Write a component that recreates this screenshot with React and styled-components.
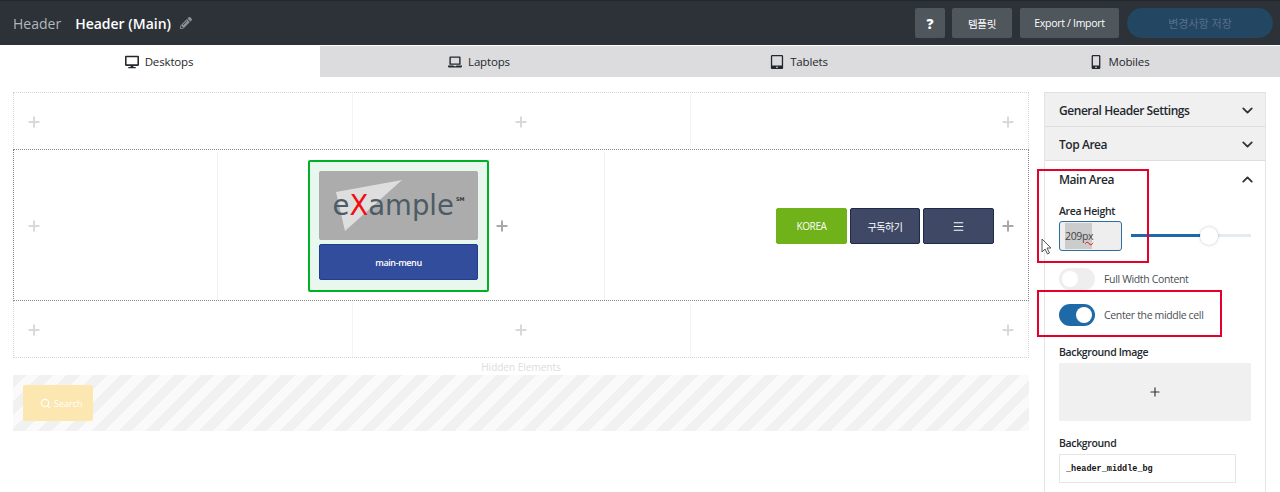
import styled, { createGlobalStyle } from 'styled-components';
import { FaDesktop, FaLaptop, FaTabletAlt, FaMobileAlt, FaPencilAlt } from 'react-icons/fa';
import { ChevronDown, ChevronUp, Plus, Search, Menu } from 'lucide-react';

const GlobalStyle = createGlobalStyle`
  html, body {
    margin: 0;
    height: 492px;
    overflow: hidden;
    background: #fff;
    font-family: 'Open Sans', 'Noto Sans CJK KR', sans-serif;
  }
  * { box-sizing: border-box; }
`;

const TABS = [
  { label: 'Desktops', Icon: FaDesktop, active: true },
  { label: 'Laptops', Icon: FaLaptop },
  { label: 'Tablets', Icon: FaTabletAlt },
  { label: 'Mobiles', Icon: FaMobileAlt },
];

function AddCell({ align }) {
  return (
    <Cell $align={align}>
      <AddIcon size={16} strokeWidth={3} />
    </Cell>
  );
}

function FadedRow() {
  return (
    <FadedGrid>
      <AddCell align="flex-start" />
      <AddCell align="center" />
      <AddCell align="flex-end" />
    </FadedGrid>
  );
}

export default function App() {
  return (
    <>
      <GlobalStyle />
      <TopBar>
        <Title>
          <Crumb>Header</Crumb>
          <CurrentName>Header (Main)</CurrentName>
          <FaPencilAlt size={12} color="#8a8f94" />
        </Title>
        <Actions>
          <BarButton $width={30} $bold>?</BarButton>
          <BarButton $width={60}>템플릿</BarButton>
          <BarButton $width={99}>Export / Import</BarButton>
          <SaveButton>변경사항 저장</SaveButton>
        </Actions>
      </TopBar>

      <TabRow>
        {TABS.map(({ label, Icon, active }) => (
          <Tab key={label} $active={active}>
            <Icon size={14} />
            {label}
          </Tab>
        ))}
      </TabRow>

      <Content>
        <Builder>
          <FadedRow />
          <MainGrid>
            <AddCell align="flex-start" />
            <CenterCell>
              <SelectedGroup>
                <LogoBox>
                  <LogoShape viewBox="0 0 159 69">
                    <polygon points="17,21 83,9 26,60" fill="#dedede" />
                  </LogoShape>
                  <LogoText>
                    e<LogoX>X</LogoX>ample<LogoMark>SM</LogoMark>
                  </LogoText>
                </LogoBox>
                <MenuBox>main-menu</MenuBox>
              </SelectedGroup>
              <DarkPlus size={16} strokeWidth={3} />
            </CenterCell>
            <RightCell>
              <SmallButton $width={71} $color="#6fb21a" $edge="#6fb21a">KOREA</SmallButton>
              <SmallButton $width={70}>구독하기</SmallButton>
              <SmallButton $width={71}><Menu size={13} /></SmallButton>
              <DarkPlus size={16} strokeWidth={3} />
            </RightCell>
          </MainGrid>
          <FadedRow />
          <HiddenLabel>Hidden Elements</HiddenLabel>
          <HiddenArea>
            <SearchChip>
              <Search size={11} strokeWidth={2.5} />
              Search
            </SearchChip>
          </HiddenArea>
        </Builder>

        <Sidebar>
          <AccordionHead>
            General Header Settings
            <ChevronDown size={17} strokeWidth={2.6} color="#333" />
          </AccordionHead>
          <AccordionHead>
            Top Area
            <ChevronDown size={17} strokeWidth={2.6} color="#333" />
          </AccordionHead>
          <OpenHead>
            Main Area
            <ChevronUp size={17} strokeWidth={2.6} color="#333" />
          </OpenHead>
          <Panel>
            <FieldLabel>Area Height</FieldLabel>
            <HeightRow>
              <HeightInput>
                <Selected>209</Selected>
                <Misspelt>px</Misspelt>
              </HeightInput>
              <Slider>
                <SliderFill />
                <SliderThumb />
              </Slider>
            </HeightRow>
            <ToggleRow $top={17}>
              <Toggle />
              Full Width Content
            </ToggleRow>
            <ToggleRow $top={14}>
              <Toggle $on />
              Center the middle cell
            </ToggleRow>
            <SpacedLabel $top={19}>Background Image</SpacedLabel>
            <ImagePicker>
              <Plus size={14} strokeWidth={2} color="#333" />
            </ImagePicker>
            <SpacedLabel $top={15}>Background</SpacedLabel>
            <TextValue defaultValue="_header_middle_bg" />
          </Panel>
          <RedMark $left={-8} $top={76} $width={112} $height={94} />
          <RedMark $left={-8} $top={197} $width={185} $height={47} />
          <Cursor viewBox="0 0 11 17">
            <path d="M1 1v13l3-3 2.5 5 2-1-2.500-5H10z" fill="#fff" stroke="#555" strokeWidth="1" />
          </Cursor>
        </Sidebar>
      </Content>
    </>
  );
}

const TopBar = styled.header`
  height: 45px;
  padding: 7px 7px 7px 13px;
  display: flex;
  justify-content: space-between;
  align-items: center;
  border-top: 1px solid #23282d;
  background: #2c3238;
`;

const Title = styled.div`
  display: flex;
  align-items: center;
  font-size: 14px;
`;

const Crumb = styled.span`
  color: #b4b7ba;
  margin-right: 14px;
`;

const CurrentName = styled.span`
  color: #fff;
  font-weight: 600;
  margin-right: 9px;
`;

const Actions = styled.div`
  display: flex;
  gap: 8px;
`;

const BarButton = styled.button`
  width: ${({ $width }) => $width}px;
  height: 30px;
  margin-right: ${({ $bold }) => ($bold ? '-1px' : '0')};
  padding: 0;
  border: 0;
  border-radius: 2px;
  background: #4f565c;
  color: #fff;
  font-family: inherit;
  font-size: ${({ $bold }) => ($bold ? '14px' : '10.5px')};
  font-weight: ${({ $bold }) => ($bold ? 800 : 400)};
  letter-spacing: ${({ $bold }) => ($bold ? '0' : '-0.3px')};
`;

const SaveButton = styled.button`
  width: 146px;
  height: 30px;
  border: 0;
  border-radius: 15px;
  background: #234662;
  color: #577088;
  font-family: inherit;
  font-size: 11px;
`;

const TabRow = styled.nav`
  margin-top: 1px;
  height: 31px;
  display: grid;
  grid-template-columns: repeat(4, 1fr);
`;

const Tab = styled.div`
  display: flex;
  justify-content: center;
  align-items: center;
  gap: 6px;
  padding-right: 2px;
  font-size: 11.5px;
  letter-spacing: -0.15px;
  color: #23282d;
  background: ${({ $active }) => ($active ? '#fff' : '#dcdcde')};
`;

const Content = styled.main`
  display: flex;
  align-items: flex-start;
  padding: 15px 14px 0 13px;
  gap: 15px;
`;

const Builder = styled.section`
  width: 1016px;
  flex: none;
`;

const FadedGrid = styled.div`
  height: 58px;
  padding-top: 1px;
  display: grid;
  grid-template-columns: repeat(3, 1fr);
  border: 1px dotted #d4d4d4;
`;

const Cell = styled.div`
  display: flex;
  align-items: center;
  justify-content: ${({ $align }) => $align};
  padding: 0 12px;
  & + & {
    box-shadow: inset 1px 0 #f4f4f4;
  }
`;

const AddIcon = styled(Plus)`
  color: #d9d9d9;
`;

const DarkPlus = styled(Plus)`
  color: #a8a8a8;
  flex: none;
`;

const MainGrid = styled.div`
  height: 152px;
  margin-top: -1px;
  margin-bottom: -1px;
  padding-top: 2px;
  display: grid;
  grid-template-columns: 203px 388px 1fr;
  border: 1px dotted #888;
  position: relative;
`;

const CenterCell = styled.div`
  display: flex;
  align-items: center;
  justify-content: center;
  gap: 5px;
  border-left: 1px solid #f0f0f0;
  border-right: 1px solid #f0f0f0;
  padding-right: 4px;
`;

const RightCell = styled.div`
  display: flex;
  align-items: center;
  justify-content: flex-end;
  gap: 3px;
  padding-right: 12px;
  & > svg {
    margin-left: 3px;
  }
`;

const SelectedGroup = styled.div`
  width: 181px;
  height: 132px;
  padding: 9px;
  display: flex;
  flex-direction: column;
  gap: 4px;
  border: 2px solid #00b125;
  border-radius: 2px;
  background: #e9f8ef;
`;

const LogoBox = styled.div`
  height: 69px;
  position: relative;
  display: flex;
  align-items: center;
  justify-content: center;
  border-radius: 2px;
  background: #acacac;
  overflow: hidden;
`;

const LogoShape = styled.svg`
  position: absolute;
  inset: 0;
  width: 100%;
  height: 100%;
`;

const LogoText = styled.div`
  position: relative;
  display: flex;
  font-family: 'DejaVu Sans', sans-serif;
  font-size: 27.5px;
  line-height: 1;
  color: #4c5b65;
`;

const LogoX = styled.span`
  color: #f00f0f;
`;

const LogoMark = styled.span`
  font-size: 5px;
  font-weight: 700;
  margin: 5px 0 0 2px;
  color: #333;
`;

const MenuBox = styled.div`
  height: 36px;
  display: flex;
  align-items: center;
  justify-content: center;
  border: 1px solid #1d3f93;
  border-radius: 2px;
  background: #324d9b;
  color: #fff;
  font-size: 9px;
  font-weight: 600;
  letter-spacing: -0.4px;
`;

const SmallButton = styled.div`
  width: ${({ $width }) => $width}px;
  height: 36px;
  display: flex;
  align-items: center;
  justify-content: center;
  border: 1px solid ${({ $edge }) => $edge || '#1e2a4a'};
  border-radius: 2px;
  background: ${({ $color }) => $color || '#3f4965'};
  color: #fff;
  font-size: 10px;
  letter-spacing: -0.4px;
`;

const HiddenLabel = styled.div`
  height: 17px;
  padding-top: 1px;
  text-align: center;
  color: #dcdcdc;
  font-size: 10px;
  line-height: 16px;
`;

const HiddenArea = styled.div`
  height: 56px;
  padding: 10px;
  background: repeating-linear-gradient(135deg, #f1f1f1 0 9.500px, #fafafa 9.500px 19px);
`;

const SearchChip = styled.div`
  width: 70px;
  height: 36px;
  padding-left: 17px;
  display: flex;
  align-items: center;
  gap: 3px;
  border-radius: 2px;
  background: #fde7b0;
  color: #fff;
  font-size: 9px;
`;

const Sidebar = styled.aside`
  width: 222px;
  flex: none;
  position: relative;
  border: 1px solid #e5e5e5;
  border-top-color: #e0e0e0;
`;

const AccordionHead = styled.div`
  height: 34px;
  padding: 1px 9px 0 14px;
  display: flex;
  align-items: center;
  justify-content: space-between;
  background: #f0f0f1;
  border-bottom: 1px solid #dedede;
  color: #23282d;
  font-size: 12px;
  font-weight: 600;
  letter-spacing: -0.45px;
`;

const OpenHead = styled(AccordionHead)`
  height: 35px;
  background: #fff;
  border-bottom: 0;
`;

const Panel = styled.div`
  padding: 8px 14px 20px;
`;

const FieldLabel = styled.div`
  font-size: 10.5px;
  font-weight: 600;
  line-height: 14px;
  letter-spacing: -0.35px;
  color: #23282d;
`;

const SpacedLabel = styled(FieldLabel)`
  margin-top: ${({ $top }) => $top}px;
`;

const HeightRow = styled.div`
  margin-top: 3px;
  display: flex;
  align-items: center;
  gap: 9px;
`;

const HeightInput = styled.div`
  width: 63px;
  height: 30px;
  padding-left: 5px;
  display: flex;
  align-items: center;
  border: 1px solid #2f6f9f;
  border-radius: 3px;
  background: #eee;
  font-size: 10.5px;
  letter-spacing: -0.35px;
  color: #444;
`;

const Selected = styled.span`
  margin-right: -10px;
  padding-right: 10px;
  background: #ccc;
  line-height: 26px;
`;

const Misspelt = styled.span`
  position: relative;
  text-decoration: underline wavy #e01010 1px;
`;

const Slider = styled.div`
  width: 120px;
  height: 3px;
  margin-top: -1px;
  position: relative;
  background: #e6ebef;
`;

const SliderFill = styled.div`
  width: 78px;
  height: 100%;
  background: #1e6aa8;
`;

const SliderThumb = styled.div`
  width: 18px;
  height: 18px;
  position: absolute;
  left: 69px;
  top: -7px;
  border-radius: 50%;
  background: #fff;
  box-shadow: 0 0 3px rgba(0, 0, 0, 0.25);
`;

const ToggleRow = styled.div`
  margin-top: ${({ $top }) => $top}px;
  display: flex;
  align-items: center;
  gap: 9px;
  color: #4a4f54;
  font-size: 10.5px;
  letter-spacing: -0.35px;
`;

const Toggle = styled.div`
  width: 36px;
  height: 22px;
  padding: 3px;
  display: flex;
  justify-content: ${({ $on }) => ($on ? 'flex-end' : 'flex-start')};
  border-radius: 11px;
  background: ${({ $on }) => ($on ? '#1e6aa8' : '#eeeeee')};
  &::after {
    content: '';
    width: 16px;
    height: 16px;
    border-radius: 50%;
    background: #fff;
  }
`;

const ImagePicker = styled.div`
  margin-top: 4px;
  height: 58px;
  display: flex;
  align-items: center;
  justify-content: center;
  background: #f0f0f0;
`;

const TextValue = styled.input`
  display: block;
  width: 177px;
  height: 29px;
  margin-top: 4px;
  padding: 0 6px;
  border: 1px solid #e6e6e6;
  outline: 0;
  background: #fff;
  color: #111;
  font-family: 'Liberation Mono', monospace;
  font-size: 8.500px;
  font-weight: 700;
`;

const RedMark = styled.div`
  position: absolute;
  left: ${({ $left }) => $left}px;
  top: ${({ $top }) => $top}px;
  width: ${({ $width }) => $width}px;
  height: ${({ $height }) => $height}px;
  border: 2px solid #e4002b;
  pointer-events: none;
`;

const Cursor = styled.svg`
  position: absolute;
  left: -4px;
  top: 145px;
  width: 11px;
  height: 17px;
`;
